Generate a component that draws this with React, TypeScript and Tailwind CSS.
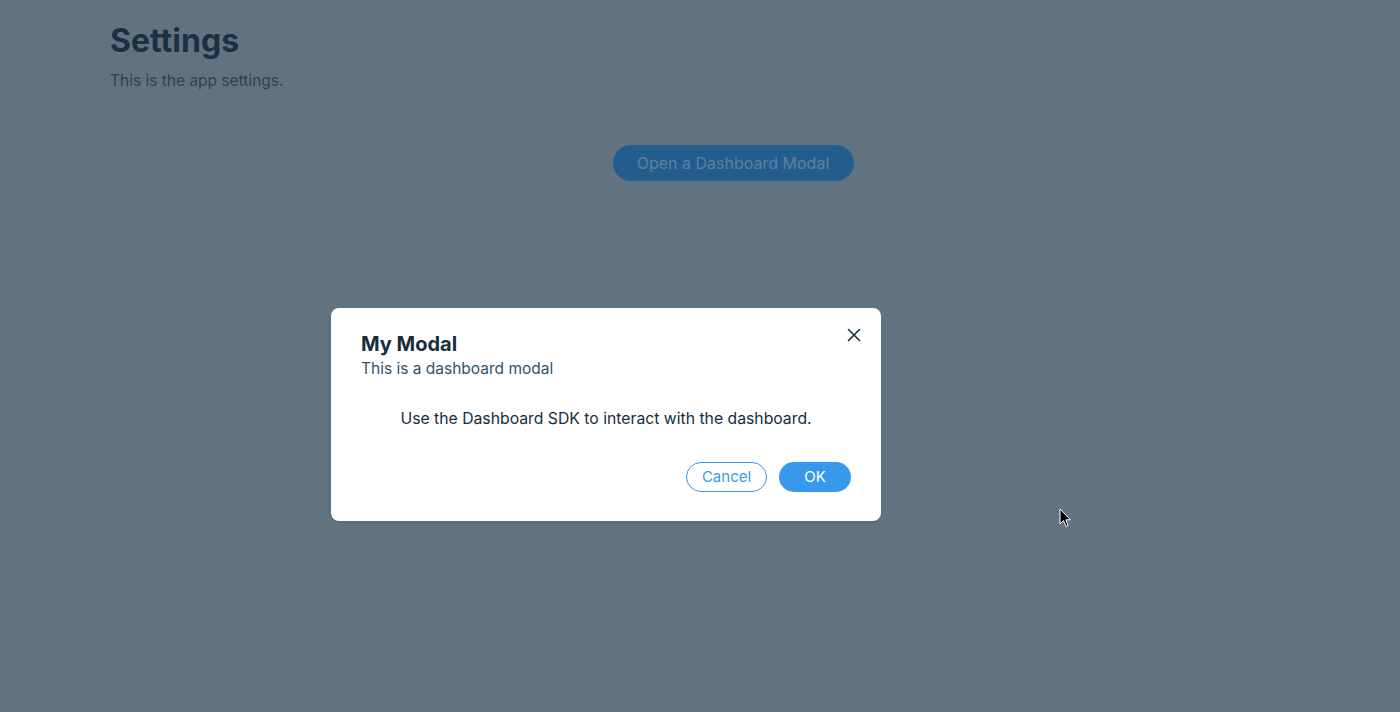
import React from "react";

export default function App() {
  return (
    <div className="relative w-[1400px] h-[712px] overflow-hidden bg-[#617380]" style={{ fontFamily: "Inter, 'Noto Sans', sans-serif" }}>
      <div className="pl-[110px] pt-[22px]">
        <h1 className="text-[32px] leading-[38px] font-bold text-[#1a3144]">Settings</h1>
        <p className="mt-[10px] text-[15.5px] leading-[22px] text-[#2c4355]">This is the app settings.</p>
      </div>
      <div className="flex justify-center pl-[66px] mt-[53px]">
        <button className="h-[36px] w-[241px] rounded-full bg-[#245d8c] text-[16px] text-[#5d81a0]">Open a Dashboard Modal</button>
      </div>

      <div className="absolute left-[331px] top-[308px] w-[550px] h-[213px] rounded-[8px] bg-white shadow">
        <div className="relative px-[30px] pt-[24px]">
          <h2 className="text-[20px] leading-[24px] font-bold text-[#162d3d]">My Modal</h2>
          <p className="mt-[2px] text-[15.5px] leading-[22px] text-[#32536a]">This is a dashboard modal</p>
          <button className="absolute right-[15px] top-[15px] w-[24px] h-[24px] flex items-center justify-center text-[#162d3d]">
            <svg width="14" height="14" viewBox="0 0 14 14" fill="none" stroke="currentColor" strokeWidth="1.6" strokeLinecap="round">
              <path d="M1.5 1.5 L12.5 12.5 M12.5 1.5 L1.5 12.5" />
            </svg>
          </button>
          <p className="mt-[28px] text-center text-[15.75px] leading-[22px] text-[#162d3d]">Use the Dashboard SDK to interact with the dashboard.</p>
          <div className="mt-[32px] flex justify-end gap-[12px]">
            <button className="h-[30px] w-[81px] rounded-full border border-[#3899ec] text-[#3899ec] text-[15px] bg-white">Cancel</button>
            <button className="h-[30px] w-[72px] rounded-full bg-[#3899ec] text-white text-[15px]">OK</button>
          </div>
        </div>
      </div>

      <svg className="absolute left-[1059px] top-[508px]" width="14" height="21" viewBox="0 0 14 21">
        <path d="M1 1 L1 16 L4.5 12.5 L7 18.5 L9.2 17.6 L6.8 11.8 L11.5 11.8 Z" fill="#000" stroke="#fff" strokeWidth="1" strokeLinejoin="round" />
      </svg>
    </div>
  );
}
